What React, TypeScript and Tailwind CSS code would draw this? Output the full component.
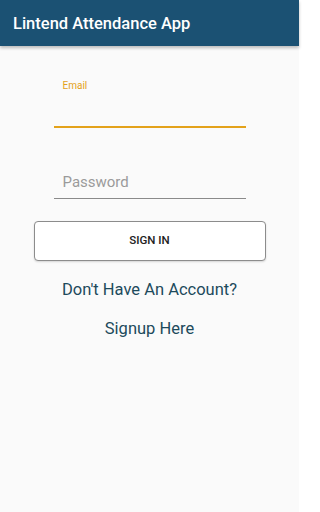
export default function App() {
  return (
    <div className="min-h-[512px] w-[299px] bg-[#fafafa] font-['Roboto',sans-serif]">
      <header className="flex h-[46px] items-center bg-[#1b5173] px-[13px] pt-[2px] shadow-[0_2px_3px_rgba(0,0,0,0.25)]">
        <h1 className="text-[16.5px] font-medium text-white">Lintend Attendance App</h1>
      </header>

      <div className="flex flex-col items-center">
        <div className="mt-[33px] w-[192px]">
          <label className="block pl-[9px] text-[10px] leading-[14px] text-[#e3a21a]">Email</label>
          <div className="h-[33px]" />
          <div className="h-[2px] bg-[#e3a21a]" />
        </div>

        <div className="mt-[44px] w-[192px]">
          <div className="pb-[6px] pl-[9px] text-[15px] leading-[20px] text-[#9a9a9a]">Password</div>
          <div className="h-px bg-[#8a8a8a]" />
        </div>

        <button className="mt-[22px] flex h-[40px] w-[232px] items-center justify-center rounded-[4px] border border-[#8c8c8c] bg-white text-[11.5px] font-medium text-[#222] shadow-[0_1px_2px_rgba(0,0,0,0.15)]">
          SIGN IN
        </button>

        <p className="mt-[19px] text-[16.5px] leading-[20px] text-[#1d4a5c]">Don't Have An Account?</p>
        <p className="mt-[19px] text-[16.5px] leading-[20px] text-[#1d4a5c]">Signup Here</p>
      </div>
    </div>
  );
}
